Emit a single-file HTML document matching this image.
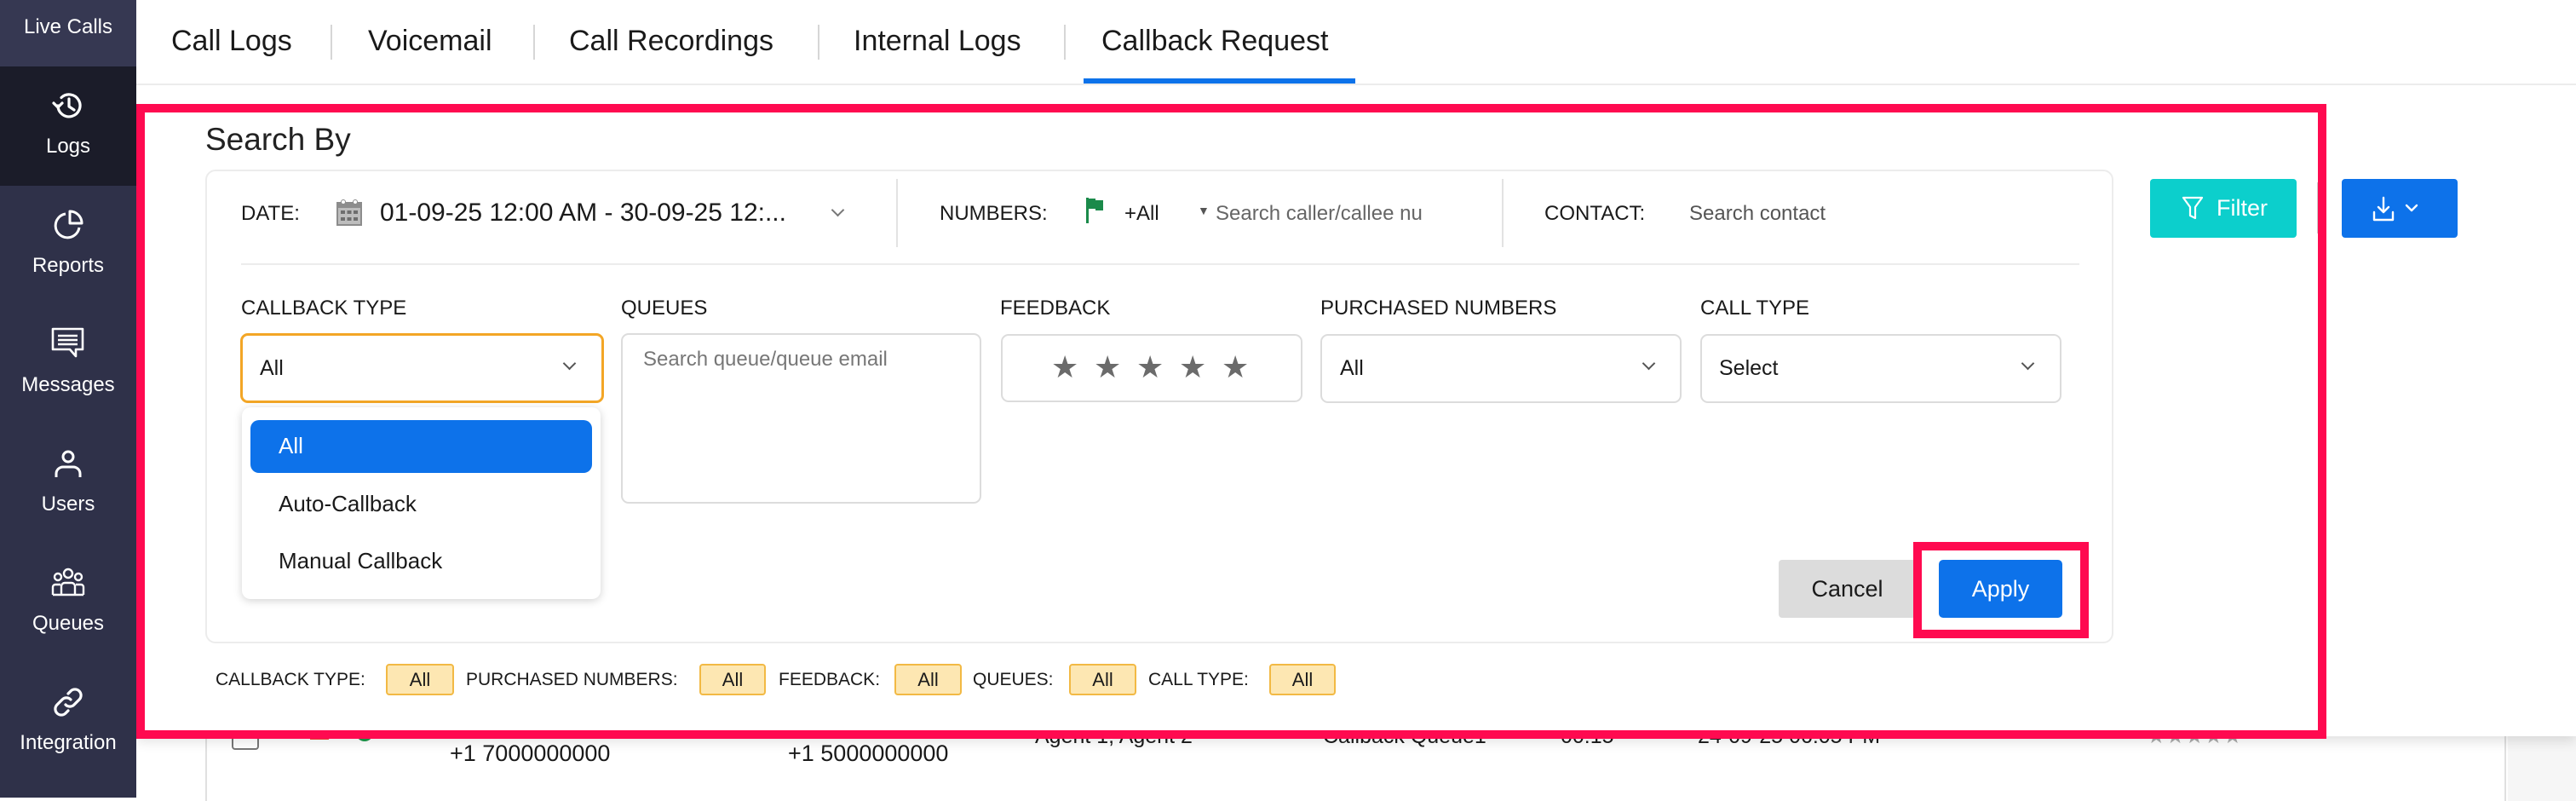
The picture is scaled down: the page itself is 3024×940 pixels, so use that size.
<!DOCTYPE html>
<html><head><meta charset="utf-8"><style>
*{box-sizing:border-box;margin:0;padding:0}
body{width:3024px;height:936px;position:relative;overflow:hidden;background:#fff;font-family:"Liberation Sans",sans-serif;color:#1a1a1a}
.a{position:absolute}
.sb{left:0;top:0;width:160px;height:936px;background:#2f3149}
.si{position:absolute;left:0;width:160px;text-align:center;color:#fff;font-size:24px}
.tab{position:absolute;top:28px;font-size:34px;color:#1a1a1a;line-height:40px}
.sep{position:absolute;top:29px;width:2px;height:41px;background:#d6d6d6}
.lbl{position:absolute;font-size:24px;color:#1a1a1a;line-height:28px}
.box{position:absolute;border:2px solid #dcdcdc;border-radius:9px;background:#fff}
.chip{position:absolute;top:779px;height:37px;background:#fde7b2;border:2px solid #f2b944;border-radius:4px;font-size:22px;text-align:center;line-height:33px;color:#1a1a1a}
.cl{position:absolute;top:786px;font-size:21px;line-height:24px;color:#1a1a1a}
.chev{position:absolute;width:13px;height:13px;border-right:2.5px solid #555;border-bottom:2.5px solid #555;transform:rotate(45deg)}
.star{position:absolute;top:411px;font-size:36px;color:#6b6b6b;line-height:40px}
</style></head><body>
<!-- background table row -->
<div class="a" style="left:241px;top:860px;width:2701px;height:80px;border-left:2px solid #e0e0e0;border-right:2px solid #e0e0e0;background:#fff"></div>
<div class="a" style="left:2944px;top:860px;width:80px;height:80px;background:#f6f6f6"></div>
<div class="a" style="left:272px;top:856px;width:32px;height:24px;border:2px solid #777;border-top:none;border-radius:0 0 4px 4px"></div>
<div class="a" style="left:364px;top:858px;width:22px;height:10px;border-bottom:3px solid #f04a3a"></div>
<div class="a" style="left:418px;top:856px;width:20px;height:14px;border:3px solid #1a9a4a;border-top:none;border-radius:0 0 10px 10px"></div>
<div class="a" style="left:528px;top:868px;font-size:27px;line-height:32px">+1 7000000000</div>
<div class="a" style="left:925px;top:868px;font-size:27px;line-height:32px">+1 5000000000</div>
<div class="a" style="left:1215px;top:850px;font-size:25px;line-height:28px">Agent 1, Agent 2</div>
<div class="a" style="left:1553px;top:850px;font-size:25px;line-height:28px">Callback Queue1</div>
<div class="a" style="left:1832px;top:850px;font-size:25px;line-height:28px">00:15</div>
<div class="a" style="left:1993px;top:850px;font-size:25px;line-height:28px">24-09-25 06:05 PM</div>
<div class="a" style="left:2520px;top:850px;font-size:25px;line-height:28px;color:#aaa">★★★★★</div>
<!-- overlay panel shadow -->
<div class="a" style="left:160px;top:0;width:2864px;height:864px;background:#fff;box-shadow:0 6px 14px rgba(0,0,0,0.12)"></div>

<!-- sidebar -->
<div class="a sb"></div>
<div class="a" style="left:0;top:0;width:160px;height:78px;background:#363852"></div>
<div class="a" style="left:0;top:78px;width:160px;height:140px;background:#1b1c29"></div>
<div class="si" style="top:18px">Live Calls</div>
<svg class="a" style="left:60px;top:104px" width="40" height="40" viewBox="0 0 40 40" fill="none" stroke="#fff" stroke-width="3.2" stroke-linecap="round" stroke-linejoin="round"><path d="M8 20A13 13 0 1 0 12 10.5"/><path d="M3 17l5 5 5-5"/><path d="M21 12v9l6 4"/></svg>
<div class="si" style="top:158px">Logs</div>
<svg class="a" style="left:60px;top:244px" width="40" height="40" viewBox="0 0 40 40" fill="none" stroke="#fff" stroke-width="3" stroke-linejoin="round"><path d="M17 7A14 14 0 1 0 33 23"/><path d="M22 4v14h14A14 14 0 0 0 22 4z"/></svg>
<div class="si" style="top:298px">Reports</div>
<svg class="a" style="left:59px;top:383px" width="42" height="42" viewBox="0 0 42 42" fill="none" stroke="#fff" stroke-width="2.6" stroke-linejoin="round"><path d="M3 3h35v24H30v8l-7-8H3z"/><path d="M9 11h23M9 16h23M9 21h23"/></svg>
<div class="si" style="top:438px">Messages</div>
<svg class="a" style="left:62px;top:526px" width="36" height="40" viewBox="0 0 36 40" fill="none" stroke="#fff" stroke-width="3"><circle cx="18" cy="10" r="6"/><path d="M4 34v-4a8 8 0 0 1 8-8h12a8 8 0 0 1 8 8v4"/></svg>
<div class="si" style="top:578px">Users</div>
<svg class="a" style="left:59px;top:666px" width="42" height="36" viewBox="0 0 42 36" fill="none" stroke="#fff" stroke-width="2.4"><circle cx="21" cy="7" r="5"/><circle cx="9" cy="11" r="4"/><circle cx="33" cy="11" r="4"/><path d="M13 32V22a4 4 0 0 1 4-4h8a4 4 0 0 1 4 4v10M3 32v-9a3 3 0 0 1 3-3h6M39 32v-9a3 3 0 0 0-3-3h-6M3 32h36"/></svg>
<div class="si" style="top:718px">Queues</div>
<svg class="a" style="left:60px;top:804px" width="40" height="40" viewBox="0 0 40 40" fill="none" stroke="#fff" stroke-width="3.2" stroke-linecap="round"><path d="M17 23a7 7 0 0 0 10 0l6-6a7 7 0 0 0-10-10l-3 3"/><path d="M23 17a7 7 0 0 0-10 0l-6 6a7 7 0 0 0 10 10l3-3"/></svg>
<div class="si" style="top:858px">Integration</div>

<!-- tabs -->
<div class="tab" style="left:201px">Call Logs</div>
<div class="sep" style="left:388px"></div>
<div class="tab" style="left:432px">Voicemail</div>
<div class="sep" style="left:626px"></div>
<div class="tab" style="left:668px">Call Recordings</div>
<div class="sep" style="left:960px"></div>
<div class="tab" style="left:1002px">Internal Logs</div>
<div class="sep" style="left:1249px"></div>
<div class="tab" style="left:1293px">Callback Request</div>
<div class="a" style="left:1272px;top:92px;width:319px;height:6px;background:#0d72ea"></div>
<div class="a" style="left:160px;top:98px;width:2864px;height:2px;background:#ececec"></div>

<!-- right buttons -->
<div class="a" style="left:2720px;top:214px;width:3px;height:60px;background:#ccc"></div>
<div class="a" style="left:2524px;top:210px;width:172px;height:69px;background:#0ccfcc;border-radius:4px;color:#fff;font-size:27px;line-height:69px;padding-left:78px">Filter</div>
<svg class="a" style="left:2561px;top:230px" width="26" height="28" viewBox="0 0 26 28" fill="none" stroke="#fff" stroke-width="2.2" stroke-linejoin="round"><path d="M2 2h22l-8 11v13l-6-3V13z"/></svg>
<div class="a" style="left:2749px;top:210px;width:136px;height:69px;background:#0d72ea;border-radius:4px"></div>
<svg class="a" style="left:2785px;top:229px" width="70" height="32" viewBox="0 0 70 32" fill="none" stroke="#fff" stroke-width="2.4" stroke-linecap="round" stroke-linejoin="round"><path d="M13 3v17M7 14l6 6 6-6M2 20v9h22v-9"/><path d="M40 12l6 6 6-6"/></svg>

<!-- red box -->
<div class="a" style="left:160px;top:122px;width:2571px;height:745px;border:10px solid #ff0a50"></div>

<div class="a" style="left:241px;top:142px;font-size:37px;line-height:44px;color:#222">Search By</div>
<div class="a" style="left:241px;top:199px;width:2240px;height:556px;border:2px solid #ececec;border-radius:12px"></div>

<div class="lbl" style="left:283px;top:237px">DATE:</div>
<svg class="a" style="left:394px;top:232px" width="32" height="34" viewBox="0 0 32 34"><rect x="1" y="5" width="30" height="28" fill="#8c8c8c"/><rect x="3" y="12" width="26" height="19" fill="#bdbdbd"/><g fill="#6e6e6e"><rect x="6" y="15" width="5" height="4"/><rect x="13.5" y="15" width="5" height="4"/><rect x="21" y="15" width="5" height="4"/><rect x="6" y="23" width="5" height="4"/><rect x="13.5" y="23" width="5" height="4"/><rect x="21" y="23" width="5" height="4"/></g><circle cx="9" cy="5" r="2.5" fill="#fff" stroke="#8c8c8c"/><circle cx="23" cy="5" r="2.5" fill="#fff" stroke="#8c8c8c"/></svg>
<div class="a" style="left:446px;top:232px;font-size:30px;line-height:36px">01-09-25 12:00 AM - 30-09-25 12:...</div>
<div class="chev" style="left:978px;top:241px;width:11px;height:11px;border-color:#777;border-width:2px"></div>
<div class="a" style="left:1052px;top:210px;width:2px;height:80px;background:#e3e3e3"></div>
<div class="lbl" style="left:1103px;top:237px">NUMBERS:</div>
<svg class="a" style="left:1275px;top:232px" width="22" height="30" viewBox="0 0 22 30"><rect x="0" y="0" width="3" height="30" fill="#1a8a4a"/><path d="M3 1h8v2h9v12h-9v-2H3z" fill="#1a8a4a"/></svg>
<div class="lbl" style="left:1320px;top:237px">+All</div>
<div class="a" style="left:1406px;top:239px;font-size:14px;color:#555">▼</div>
<div class="lbl" style="left:1427px;top:237px;color:#666">Search caller/callee nu</div>
<div class="a" style="left:1763px;top:210px;width:2px;height:80px;background:#e3e3e3"></div>
<div class="lbl" style="left:1813px;top:237px">CONTACT:</div>
<div class="lbl" style="left:1983px;top:237px;color:#555">Search contact</div>
<div class="a" style="left:283px;top:309px;width:2158px;height:2px;background:#ececec"></div>

<div class="lbl" style="left:283px;top:348px">CALLBACK TYPE</div>
<div class="lbl" style="left:729px;top:348px">QUEUES</div>
<div class="lbl" style="left:1174px;top:348px">FEEDBACK</div>
<div class="lbl" style="left:1550px;top:348px">PURCHASED NUMBERS</div>
<div class="lbl" style="left:1996px;top:348px">CALL TYPE</div>

<div class="box" style="left:282px;top:391px;width:427px;height:82px;border:3px solid #f3a626;border-radius:9px"></div>
<div class="a" style="left:305px;top:417px;font-size:25px;line-height:30px">All</div>
<div class="chev" style="left:663px;top:421px;width:11px;height:11px;border-width:2px"></div>

<div class="box" style="left:729px;top:391px;width:423px;height:200px"></div>
<div class="a" style="left:755px;top:407px;font-size:24px;line-height:30px;color:#777">Search queue/queue email</div>

<div class="box" style="left:1175px;top:392px;width:354px;height:80px"></div>
<div class="star" style="left:1234px">★</div><div class="star" style="left:1284px">★</div><div class="star" style="left:1334px">★</div><div class="star" style="left:1384px">★</div><div class="star" style="left:1434px">★</div>

<div class="box" style="left:1550px;top:392px;width:424px;height:81px"></div>
<div class="a" style="left:1573px;top:417px;font-size:25px;line-height:30px">All</div>
<div class="chev" style="left:1930px;top:421px;width:11px;height:11px;border-width:2px"></div>
<div class="box" style="left:1996px;top:392px;width:424px;height:81px"></div>
<div class="a" style="left:2018px;top:417px;font-size:25px;line-height:30px">Select</div>
<div class="chev" style="left:2375px;top:421px;width:11px;height:11px;border-width:2px"></div>

<!-- dropdown -->
<div class="a" style="left:284px;top:478px;width:421px;height:225px;background:#fff;border-radius:10px;box-shadow:0 2px 10px rgba(0,0,0,0.18)"></div>
<div class="a" style="left:294px;top:493px;width:401px;height:62px;background:#0d72ea;border-radius:10px"></div>
<div class="a" style="left:327px;top:508px;font-size:26px;line-height:30px;color:#fff">All</div>
<div class="a" style="left:327px;top:576px;font-size:26px;line-height:30px">Auto-Callback</div>
<div class="a" style="left:327px;top:643px;font-size:26px;line-height:30px">Manual Callback</div>

<!-- buttons -->
<div class="a" style="left:2088px;top:657px;width:161px;height:68px;background:#dcdcdc;border-radius:4px;font-size:27px;line-height:68px;text-align:center">Cancel</div>
<div class="a" style="left:2276px;top:657px;width:145px;height:68px;background:#0d72ea;border-radius:5px;font-size:27px;line-height:68px;text-align:center;color:#fff">Apply</div>
<div class="a" style="left:2246px;top:636px;width:206px;height:113px;border:10px solid #ff0a50"></div>

<!-- chips -->
<div class="cl" style="left:253px">CALLBACK TYPE:</div>
<div class="chip" style="left:453px;width:80px">All</div>
<div class="cl" style="left:547px">PURCHASED NUMBERS:</div>
<div class="chip" style="left:821px;width:78px">All</div>
<div class="cl" style="left:914px">FEEDBACK:</div>
<div class="chip" style="left:1050px;width:79px">All</div>
<div class="cl" style="left:1142px">QUEUES:</div>
<div class="chip" style="left:1255px;width:79px">All</div>
<div class="cl" style="left:1348px">CALL TYPE:</div>
<div class="chip" style="left:1490px;width:78px">All</div>
</body></html>
